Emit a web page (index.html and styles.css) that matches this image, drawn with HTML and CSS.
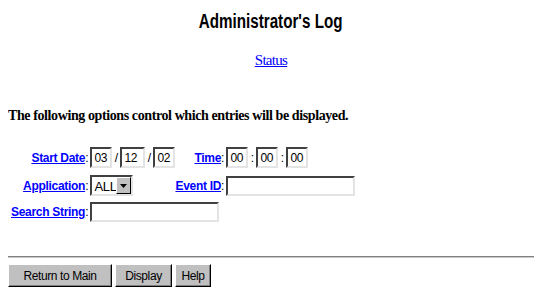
FILE: index.html
```html
<!DOCTYPE html>
<html lang="en">

<head>
  <meta charset="UTF-8" />
  <title>Administrator's Log</title>
  <link rel="stylesheet" href="styles.css">
</head>

<body>
  <h1 class="title"><span class="title-text">Administrator's Log</span></h1>
  <p class="nav"><a href="#">Status</a></p>

  <p class="intro">The following options control which entries will be displayed.</p>

  <form class="filters">
    <table class="filter-table">
      <tr class="first-row">
        <td class="label"><a href="#">Start Date</a>:</td>
        <td class="field">
          <input class="box small" type="text" value="03"><span class="sep">/</span><input class="box small wide" type="text" value="12"><span class="sep">/</span><input class="box small" type="text" value="02">
        </td>
        <td class="label"><a href="#">Time</a>:</td>
        <td class="field">
          <input class="box small" type="text" value="00"><span class="sep">:</span><input class="box small" type="text" value="00"><span class="sep">:</span><input class="box small" type="text" value="00">
        </td>
      </tr>
      <tr>
        <td class="label"><a href="#">Application</a>:</td>
        <td class="field">
          <span class="combo">
            <select class="combo-select">
              <option>ALL</option>
            </select>
            <span class="combo-btn">
              <svg width="7" height="4" viewBox="0 0 7 4"><path d="M0 0H7L3.5 4Z" fill="#000"/></svg>
            </span>
          </span>
        </td>
        <td class="label"><a href="#">Event ID</a>:</td>
        <td class="field"><input class="box long" type="text"></td>
      </tr>
      <tr>
        <td class="label"><a href="#">Search String</a>:</td>
        <td class="field" colspan="3"><input class="box long" type="text"></td>
      </tr>
    </table>
  </form>

  <hr class="rule">

  <div class="actions">
    <button class="btn btn-main">Return to Main</button>
    <button class="btn btn-display">Display</button>
    <button class="btn btn-help">Help</button>
  </div>
</body>

</html>
```

FILE: styles.css
```css
body {
  margin: 8px;
  font-family: "Liberation Serif", "Times New Roman", serif;
  color: #000;
  background: #fff;
}

a {
  color: #0000ff;
}

.title {
  margin: 1px 0 0 0;
  text-align: center;
  font-family: "Liberation Sans", Arial, sans-serif;
  font-size: 20px;
  line-height: 24px;
}

.title-text {
  display: inline-block;
  transform: scaleX(0.76);
}

.nav {
  margin: 19px 0 0 0;
  text-align: center;
  font-size: 15px;
  letter-spacing: -0.7px;
  line-height: 16px;
}

.intro {
  margin: 40px 0 0 0;
  font-size: 14px;
  font-weight: bold;
  letter-spacing: -0.4px;
  line-height: 16px;
}

.filters {
  margin: 23px 0 0 3px;
}

.filter-table {
  border-collapse: collapse;
}

.filter-table td {
  padding: 0 0 6px 0;
  vertical-align: middle;
  font-family: "Liberation Sans", Arial, sans-serif;
  font-size: 12px;
  white-space: nowrap;
}

.filter-table .first-row td {
  padding-bottom: 7px;
}

.label {
  text-align: right;
}

.label a {
  font-weight: bold;
  letter-spacing: -0.3px;
}

.filter-table .field {
  padding-left: 2px;
  padding-right: 0;
}

.sep {
  display: inline-block;
  width: 8px;
  text-align: center;
  vertical-align: middle;
}

.box {
  box-sizing: border-box;
  height: 21px;
  margin: 0;
  padding: 1px 2px 0 2px;
  border: 2px solid;
  border-color: #404040 #e4e4e4 #e4e4e4 #404040;
  font-family: "Liberation Sans", Arial, sans-serif;
  font-size: 12px;
  letter-spacing: -0.3px;
  vertical-align: middle;
  background: #fff;
  color: #000;
}

.small {
  width: 22px;
}

.wide {
  width: 25px;
}

.long {
  width: 129px;
  height: 20px;
}

.combo {
  position: relative;
  display: inline-block;
  vertical-align: middle;
}

.combo-select {
  appearance: none;
  box-sizing: border-box;
  width: 43px;
  height: 21px;
  margin: 0;
  padding: 1px 0 0 2px;
  border: 2px solid;
  border-color: #404040 #e4e4e4 #e4e4e4 #404040;
  border-radius: 0;
  background: #fff;
  font-family: "Liberation Sans", Arial, sans-serif;
  font-size: 13px;
  letter-spacing: -0.3px;
  color: #000;
}

.combo-btn {
  position: absolute;
  top: 2px;
  right: 2px;
  width: 15px;
  height: 17px;
  box-sizing: border-box;
  display: flex;
  align-items: center;
  justify-content: center;
  background: #c0c0c0;
  border: 1px solid;
  border-color: #fff #000 #000 #fff;
  pointer-events: none;
}

.rule {
  margin: 28px 0 0 0;
  border: 0;
  border-top: 1px solid #808080;
  border-bottom: 1px solid #c8c8c8;
  height: 0;
}

.actions {
  margin-top: 6px;
  display: flex;
  gap: 3px;
}

.btn {
  box-sizing: border-box;
  height: 23px;
  padding: 0;
  background: #c0c0c0;
  border: 1px solid;
  border-color: #fff #000 #000 #fff;
  box-shadow: inset -1px -1px 0 #808080;
  font-family: "Liberation Sans", Arial, sans-serif;
  font-size: 12px;
  letter-spacing: -0.4px;
  color: #000;
}

.btn-main {
  width: 104px;
}

.btn-display {
  width: 57px;
}

.btn-help {
  width: 36px;
}
```
